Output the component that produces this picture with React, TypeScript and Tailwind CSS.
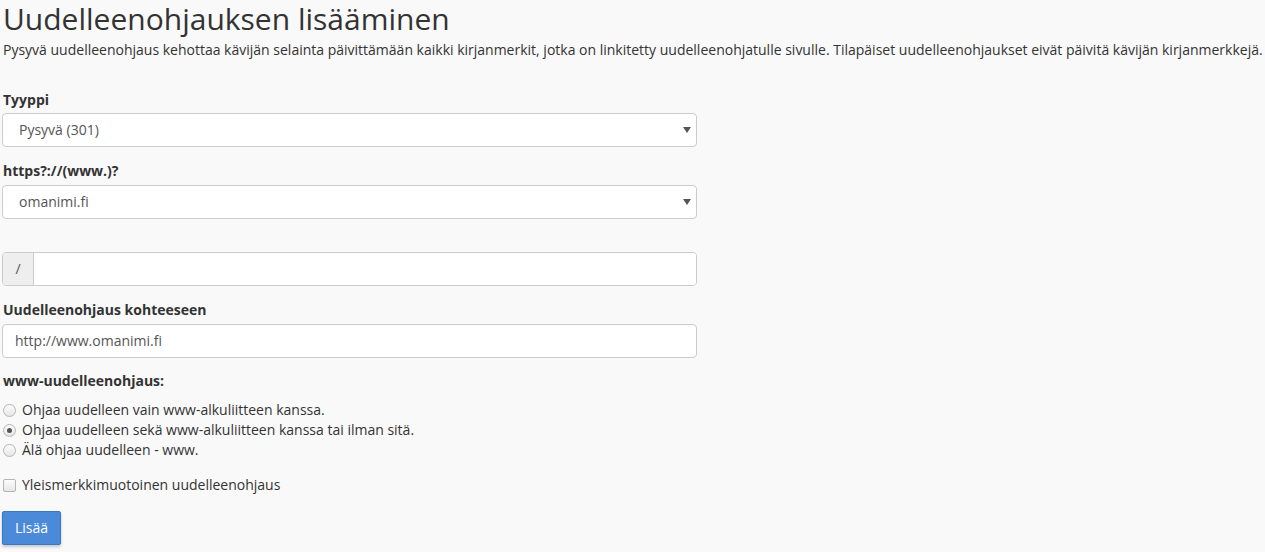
import React from "react";

function Radio({ checked, label }: { checked?: boolean; label: string }) {
  return (
    <label className="flex items-center h-5 gap-[6px]">
      <span className="w-[13px] h-[13px] rounded-full border border-[#b5b5b5] bg-gradient-to-b from-[#fdfdfd] to-[#e6e6e6] flex items-center justify-center ml-px">
        {checked && <span className="w-[5px] h-[5px] rounded-full bg-[#555]" />}
      </span>
      <span>{label}</span>
    </label>
  );
}

function Caret() {
  return (
    <svg width="8" height="6" viewBox="0 0 8 6" className="absolute right-[5px] top-1/2 -translate-y-1/2">
      <path d="M0 0h8L4 6z" fill="#555" />
    </svg>
  );
}

export default function App() {
  return (
    <div className="min-h-[552px] bg-[#f9f9f9] text-[#333] text-[14px] leading-5 px-[2px] font-['Open_Sans',sans-serif]">
      <h1 className="text-[30px] leading-[38px] pl-[1px]">Uudelleenohjauksen lisääminen</h1>
      <p className="mt-[2px] whitespace-nowrap pl-px">
        Pysyvä uudelleenohjaus kehottaa kävijän selainta päivittämään kaikki kirjanmerkit, jotka on linkitetty uudelleenohjatulle sivulle. Tilapäiset uudelleenohjaukset eivät päivitä kävijän kirjanmerkkejä.
      </p>

      <div className="w-[695px] mt-[30px]">
        <div className="font-bold pl-px">Tyyppi</div>
        <div className="relative mt-[3px] h-[34px] bg-white border border-[#ccc] rounded-[4px] flex items-center pl-[16px] text-[#555]">
          Pysyvä (301)
          <Caret />
        </div>

        <div className="font-bold mt-[14px] pl-px">https?://(www.)?</div>
        <div className="relative mt-[4px] h-[34px] bg-white border border-[#ccc] rounded-[4px] flex items-center pl-[16px] text-[#555]">
          omanimi.fi
          <Caret />
        </div>

        <div className="mt-[33px] h-[34px] flex border border-[#ccc] rounded-[4px] overflow-hidden">
          <div className="w-[31px] bg-[#eee] border-r border-[#ccc] flex items-center justify-center text-[#555]">/</div>
          <div className="flex-1 bg-white" />
        </div>

        <div className="font-bold mt-[14px] pl-px">Uudelleenohjaus kohteeseen</div>
        <div className="mt-[4px] h-[34px] bg-white border border-[#ccc] rounded-[4px] flex items-center pl-[12px] text-[#555]">
          http://www.omanimi.fi
        </div>

        <div className="font-bold mt-[13px] pl-px">www-uudelleenohjaus:</div>
        <div className="mt-[9px] flex flex-col">
          <Radio label="Ohjaa uudelleen vain www-alkuliitteen kanssa." />
          <Radio checked label="Ohjaa uudelleen sekä www-alkuliitteen kanssa tai ilman sitä." />
          <Radio label="Älä ohjaa uudelleen - www." />
        </div>

        <label className="flex items-center h-5 gap-[6px] mt-[15px]">
          <span className="w-[13px] h-[13px] rounded-[2px] border border-[#b5b5b5] bg-gradient-to-b from-[#fdfdfd] to-[#e6e6e6] ml-px" />
          <span>Yleismerkkimuotoinen uudelleenohjaus</span>
        </label>

        <button className="mt-[16px] h-[34px] w-[59px] bg-[#4a8ad8] border border-[#3a78c4] rounded-[2px] text-white shadow-[0_2px_3px_rgba(0,0,0,0.2)]">
          Lisää
        </button>
      </div>
    </div>
  );
}
